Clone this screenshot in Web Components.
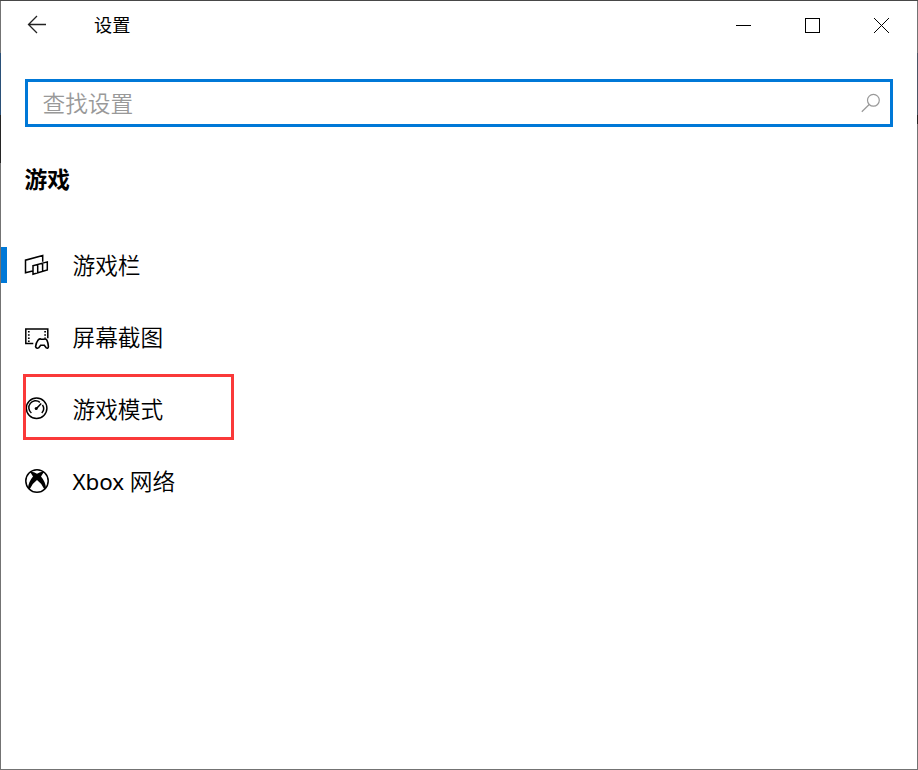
<!DOCTYPE html>
<html lang="zh-CN"><head><meta charset="utf-8"><title>设置</title>
<style>html,body{margin:0;height:100%;overflow:hidden;background:#fff}</style></head>
<body>
<settings-window></settings-window>
<script>
const icons = {
  bar: '<path transform="translate(0 2.3)" d="M8.5 16.8L1.5 18.4V5.9L18.7 1.3V7.5M9 11.4L23.3 7.6V15.7L9 19.9ZM13.7 10.3V18.4M18.6 9V17"/>',
  capture: '<g transform="translate(.3 2)"><path d="M9 17.6H1.5V2.9H23.5V12.3"/><path d="M4.5 5v11M20.8 5v7" stroke-width="1.7" stroke-dasharray="1.6 1.6"/><path d="M13.8 14.1Q15.5 12.3 17 13.3H19.4Q21.3 12.2 22.6 14.1Q24 17 24.1 20.6Q23.9 22.9 22 21.9L20 19.2H16.4L14.3 21.9Q12.2 22.9 11.3 20.6Q11.8 16.6 13.8 14.1Z" stroke-width="1.6"/></g>',
  mode: '<g transform="translate(.2 -.2)"><circle cx="12.4" cy="12.5" r="10.3"/><path d="M7.2 17.2A6.8 6.8 0 0 1 15.7 6.5M18.3 9A6.8 6.8 0 0 1 17.6 17.2"/><path d="M12.3 12.6L17 7.8"/><circle cx="12" cy="12.8" r="1.5" fill="#000" stroke="none"/></g>',
  xbox: '<circle cx="13" cy="13" r="11.2"/><path d="M6 3.7Q9.5 3.3 13 5.8Q16.5 3.3 20 3.7L17 8.6Q21.4 13.8 22 20L20.3 21.2Q18 15.6 13 12Q8 15.6 5.7 21.2L4 20Q4.6 13.8 9 8.6Z" fill="#000" stroke="none"/>'
};
const define = (name, css, html) => customElements.define(name, class extends HTMLElement {
  constructor() {
    super();
    this.attachShadow({mode: 'open'}).innerHTML =
      `<style>*{box-sizing:border-box}svg{display:block;fill:none}${css}</style>${typeof html === 'function' ? html(this) : html}`;
  }
});
define('title-bar', `
  :host{display:flex;height:49px;align-items:center;color:#000;font-size:18.2px}
  .back{margin-left:26px;margin-bottom:1px;width:20px}
  .name{margin-left:47px;line-height:26px;flex:1;padding-bottom:1px;font-weight:400}
  .controls{display:flex;margin-right:27px;gap:53px;padding-top:1px}
`, `<svg class="back" width="20" height="20" viewBox="0 0 20 20" stroke="#222" stroke-width="1.3"><path d="M19 9.5H1.5M10 1L1.5 9.5L10 18"/></svg>
  <span class="name"><slot></slot></span>
  <div class="controls">
   <svg width="16" height="16" stroke="#000"><path d="M0 7.5H15"/></svg>
   <svg width="16" height="16" stroke="#000"><rect x=".5" y=".5" width="14" height="14"/></svg>
   <svg width="16" height="16" stroke="#000" stroke-width="1"><path d="M0 0L15 15M15 0L0 15"/></svg>
  </div>`);
define('search-box', `
  :host{display:flex;box-sizing:border-box;height:48px;margin:29px 24px 0;border:3px solid #0078d7;align-items:center;justify-content:space-between;padding:0 9px 0 14.5px;color:#999}
  span{padding-bottom:1px}
`, `<span><slot></slot></span><svg width="20" height="20" viewBox="0 0 20 20" stroke="#999" stroke-width="1.2"><circle cx="12.4" cy="7.3" r="5.9"/><path d="M8.2 11.5L.8 18.8"/></svg>`);
define('section-title', `:host{display:block;margin:37px 24px 0 23.5px;line-height:32px;font-weight:700}`, `<slot></slot>`);
define('nav-item', `
  :host{display:flex;height:72px;align-items:center;position:relative}
  :host([selected])::before{content:"";position:absolute;left:0;top:18px;width:6px;height:36px;background:#0078d7}
  svg{margin-left:23px;width:26px;height:26px}
  .label{margin-left:22.5px;line-height:32px;padding-top:1px}
  ::slotted(span){font-weight:400;font-size:22.4px;letter-spacing:-.1px}
  :host([marked])::after{content:"";position:absolute;box-sizing:border-box;left:22px;top:1px;width:211px;height:66px;border:3px solid #fa3939}
`, el => `<svg viewBox="0 0 26 26" stroke="#000" stroke-width="1.5">${icons[el.getAttribute('icon')]}</svg><span class="label"><slot></slot></span>`);
define('settings-window', `
  :host{display:grid;grid-template-columns:1px 1fr 1px;box-sizing:border-box;width:918px;height:770px;border:solid #737373;border-width:1px 0;border-top-color:#484848;background:#fff;font:350 22.7px "Noto Sans","Noto Sans CJK SC",sans-serif;color:#000}
  main{min-width:0}
  nav{margin-top:33px}
  .l{background:linear-gradient(#737373 52px,#2a5078 52px 114px,#242424 114px 162px,#737373 162px)}
  .r{background:linear-gradient(#737373 52px,#4a5664 52px 114px,#222 114px 123px,#737373 123px)}
`, `<div class="l"></div><main><title-bar>设置</title-bar><search-box>查找设置</search-box><section-title>游戏</section-title>
<nav><nav-item icon="bar" selected>游戏栏</nav-item><nav-item icon="capture">屏幕截图</nav-item><nav-item icon="mode" marked>游戏模式</nav-item><nav-item icon="xbox"><span>Xbox</span> 网络</nav-item></nav></main><div class="r"></div>`);
</script></body></html>
